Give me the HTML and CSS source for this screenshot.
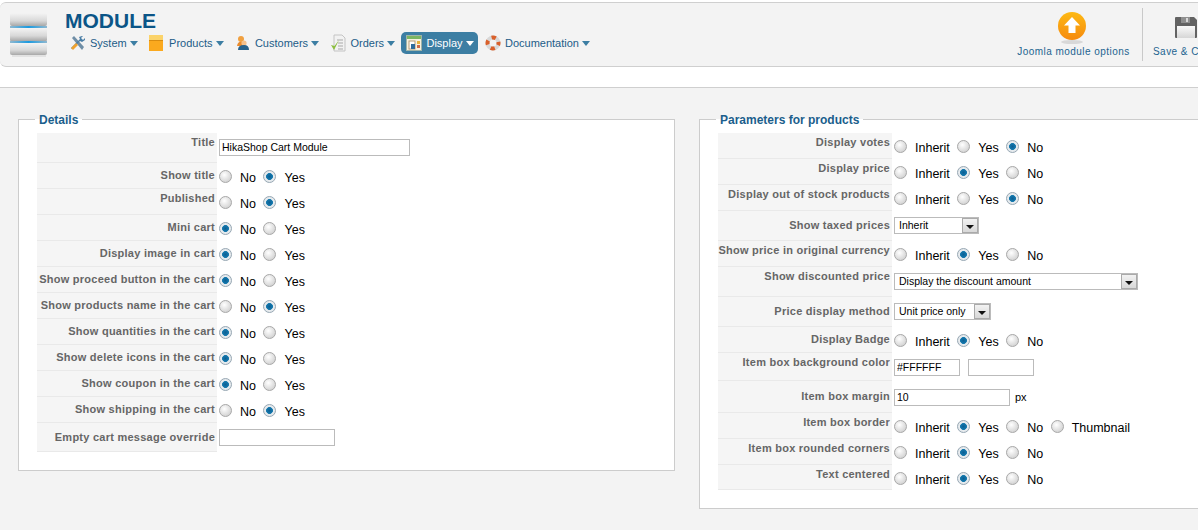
FILE: index.html
```html
<!DOCTYPE html>
<html lang="en">
<head>
<meta charset="utf-8">
<title>Module</title>
<link rel="stylesheet" href="styles.css">
</head>
<body>
<header class="header">
  <div class="brand">
    <svg class="logo" viewBox="0 0 40 46" width="40" height="46">
      <defs>
        <linearGradient id="disk" x1="0" y1="0" x2="0" y2="1"><stop offset="0" stop-color="#f4f4f4"/><stop offset=".6" stop-color="#d8d8d8"/><stop offset="1" stop-color="#a8a8a8"/></linearGradient>
        <linearGradient id="blue" x1="0" y1="0" x2="1" y2="0"><stop offset="0" stop-color="#8fb8d0"/><stop offset=".5" stop-color="#1c9be0"/><stop offset="1" stop-color="#8fb8d0"/></linearGradient>
      </defs>
      <rect x="1" y="1" width="37" height="13" rx="2" fill="url(#disk)"/>
      <rect x="1" y="14" width="37" height="2" fill="url(#blue)"/>
      <rect x="1" y="16" width="37" height="13" rx="1" fill="url(#disk)"/>
      <rect x="1" y="29" width="37" height="2" fill="url(#blue)"/>
      <rect x="1" y="31" width="37" height="12" rx="2" fill="url(#disk)"/>
      <rect x="3" y="43" width="34" height="2" fill="#e2e2e2"/>
    </svg>
    <div class="brand-text">
      <h1 class="title">MODULE</h1>
      <nav class="nav">
        <a class="nav-item">
          <svg class="nav-icon" viewBox="0 0 16 16" width="16" height="16"><path d="M2 3l2-2 10 11-2 3z" fill="#6f8ea6"/><path d="M1 13L10 4l-1-2 3-1 1 0-2 2 2 2 2-2v2l-3 2-2-1-8 8z" fill="#4a7ea6"/><path d="M1 13l5-5 2 2-5 5z" fill="#f0a22e"/></svg>
          <span>System</span><i class="caret"></i>
        </a>
        <a class="nav-item">
          <svg class="nav-icon shift" viewBox="0 0 16 18" width="16" height="18"><rect x="1" y="1" width="14" height="5" fill="#fbd36a"/><rect x="1" y="6" width="14" height="11" fill="#fba91e"/><rect x="1" y="6" width="14" height="1" fill="#d98c10"/></svg>
          <span>Products</span><i class="caret"></i>
        </a>
        <a class="nav-item">
          <svg class="nav-icon shift" viewBox="0 0 16 16" width="16" height="16"><circle cx="7" cy="4" r="3" fill="#f0a040"/><path d="M3 11q1-5 5-4 3 0 3 4z" fill="#e98a2c"/><circle cx="10" cy="8" r="2.6" fill="#f5c08a"/><path d="M4 15q0-5 6-5 5 0 5 5z" fill="#27628c"/></svg>
          <span>Customers</span><i class="caret"></i>
        </a>
        <a class="nav-item">
          <svg class="nav-icon" viewBox="0 0 16 18" width="16" height="18"><path d="M4 1h8l3 3v13H4z" fill="#f2f2f2" stroke="#c4c4c4"/><path d="M7 6h6M8 9h5M8 12h5M8 15h5" stroke="#a9a9a9"/><path d="M1 11l3 5 5-10-4.500 6z" fill="#8cbf3f"/></svg>
          <span>Orders</span><i class="caret"></i>
        </a>
        <a class="nav-item active">
          <svg class="nav-icon" viewBox="0 0 16 16" width="16" height="16"><rect x=".5" y=".5" width="15" height="15" fill="#f7f1df" stroke="#9fb3a8"/><rect x="1" y="1" width="14" height="3" fill="#7cb662"/><rect x="3" y="6" width="6" height="8" fill="#fff" stroke="#b79b77"/><rect x="5" y="9" width="4" height="5" fill="#2e6c9c"/><rect x="11" y="6" width="3" height="3" fill="#e8b23c"/><rect x="11" y="10" width="3" height="3" fill="#cf6a4a"/></svg>
          <span>Display</span><i class="caret"></i>
        </a>
        <a class="nav-item">
          <svg class="nav-icon" viewBox="0 0 16 16" width="16" height="16"><circle cx="8" cy="8" r="5.500" fill="none" stroke="#d8d8d8" stroke-width="4"/><circle cx="8" cy="8" r="5.500" fill="none" stroke="#d9602b" stroke-width="4" stroke-dasharray="4.300 4.340" stroke-dashoffset="2.100"/></svg>
          <span>Documentation</span><i class="caret"></i>
        </a>
      </nav>
    </div>
  </div>
  <div class="toolbar">
    <a class="tool tool-options">
      <svg viewBox="0 0 32 34" width="32" height="34"><defs><linearGradient id="org" x1="0" y1="0" x2="0" y2="1"><stop offset="0" stop-color="#fdb913"/><stop offset="1" stop-color="#f68a0e"/></linearGradient></defs><ellipse cx="16" cy="31" rx="11" ry="2" fill="#d8d8d8"/><circle cx="16" cy="15" r="14" fill="url(#org)"/><path d="M16 6l8 8.500h-4.500V22h-7v-7.500H8z" fill="#fff"/></svg>
      <span>Joomla module options</span>
    </a>
    <a class="tool tool-save">
      <svg viewBox="0 0 24 26" width="24" height="26"><defs><linearGradient id="sheet" x1="0" y1="0" x2="0" y2="1"><stop offset="0" stop-color="#fafafa"/><stop offset="1" stop-color="#d6d6d6"/></linearGradient></defs><path d="M2 2h18l3 3v17q0 1-1 1H2q-1 0-1-1V3q0-1 1-1z" fill="#636363"/><rect x="7" y="2" width="9" height="6" fill="#8f8f8f"/><rect x="12" y="3" width="2" height="4" fill="#d8d8d8"/><rect x="3" y="11" width="18" height="12" fill="url(#sheet)"/></svg>
      <span>Save &amp; Close</span>
    </a>
  </div>
</header>
<div class="spacer"></div>
<main class="content">
  <fieldset class="panel panel-left">
    <legend>Details</legend>
    <table class="form">
      <tr class="h29"><td class="key">Title</td><td class="val val-input v6"><input class="text w-title" type="text" value="HikaShop Cart Module"></td></tr>
      <tr><td class="key mid">Show title</td><td class="val"><input class="radio" type="radio" name="a1"><label>No</label><input class="radio" type="radio" name="a1" checked><label>Yes</label></td></tr>
      <tr><td class="key">Published</td><td class="val"><input class="radio" type="radio" name="a2"><label>No</label><input class="radio" type="radio" name="a2" checked><label>Yes</label></td></tr>
      <tr><td class="key mid">Mini cart</td><td class="val"><input class="radio" type="radio" name="a3" checked><label>No</label><input class="radio" type="radio" name="a3"><label>Yes</label></td></tr>
      <tr><td class="key mid">Display image in cart</td><td class="val"><input class="radio" type="radio" name="a4" checked><label>No</label><input class="radio" type="radio" name="a4"><label>Yes</label></td></tr>
      <tr><td class="key mid">Show proceed button in the cart</td><td class="val"><input class="radio" type="radio" name="a5" checked><label>No</label><input class="radio" type="radio" name="a5"><label>Yes</label></td></tr>
      <tr><td class="key mid">Show products name in the cart</td><td class="val"><input class="radio" type="radio" name="a6"><label>No</label><input class="radio" type="radio" name="a6" checked><label>Yes</label></td></tr>
      <tr><td class="key mid">Show quantities in the cart</td><td class="val"><input class="radio" type="radio" name="a7" checked><label>No</label><input class="radio" type="radio" name="a7"><label>Yes</label></td></tr>
      <tr><td class="key mid">Show delete icons in the cart</td><td class="val"><input class="radio" type="radio" name="a8" checked><label>No</label><input class="radio" type="radio" name="a8"><label>Yes</label></td></tr>
      <tr><td class="key mid">Show coupon in the cart</td><td class="val"><input class="radio" type="radio" name="a9" checked><label>No</label><input class="radio" type="radio" name="a9"><label>Yes</label></td></tr>
      <tr><td class="key mid">Show shipping in the cart</td><td class="val"><input class="radio" type="radio" name="a10"><label>No</label><input class="radio" type="radio" name="a10" checked><label>Yes</label></td></tr>
      <tr class="h29"><td class="key mid">Empty cart message override</td><td class="val val-input"><input class="text w-empty" type="text"></td></tr>
    </table>
  </fieldset>
  <fieldset class="panel panel-right">
    <legend>Parameters for products</legend>
    <table class="form form-right">
      <tr class="h25"><td class="key">Display votes</td><td class="val"><input class="radio" type="radio" name="b1"><label>Inherit</label><input class="radio" type="radio" name="b1"><label>Yes</label><input class="radio" type="radio" name="b1" checked><label>No</label></td></tr>
      <tr><td class="key">Display price</td><td class="val"><input class="radio" type="radio" name="b2"><label>Inherit</label><input class="radio" type="radio" name="b2" checked><label>Yes</label><input class="radio" type="radio" name="b2"><label>No</label></td></tr>
      <tr><td class="key">Display out of stock products</td><td class="val"><input class="radio" type="radio" name="b3"><label>Inherit</label><input class="radio" type="radio" name="b3"><label>Yes</label><input class="radio" type="radio" name="b3" checked><label>No</label></td></tr>
      <tr class="h30"><td class="key mid">Show taxed prices</td><td class="val val-input"><span class="sel w-taxed"><select><option>Inherit</option></select><i class="sel-btn"></i></span></td></tr>
      <tr><td class="key">Show price in original currency</td><td class="val"><input class="radio" type="radio" name="b4"><label>Inherit</label><input class="radio" type="radio" name="b4" checked><label>Yes</label><input class="radio" type="radio" name="b4"><label>No</label></td></tr>
      <tr class="h30"><td class="key">Show discounted price</td><td class="val val-input"><span class="sel w-disc"><select><option>Display the discount amount</option></select><i class="sel-btn"></i></span></td></tr>
      <tr class="h30"><td class="key mid">Price display method</td><td class="val val-input"><span class="sel w-method"><select><option>Unit price only</option></select><i class="sel-btn"></i></span></td></tr>
      <tr><td class="key mid">Display Badge</td><td class="val"><input class="radio" type="radio" name="b5"><label>Inherit</label><input class="radio" type="radio" name="b5" checked><label>Yes</label><input class="radio" type="radio" name="b5"><label>No</label></td></tr>
      <tr class="h28"><td class="key">Item box background color</td><td class="val val-input"><input class="text w-color" type="text" value="#FFFFFF"><input class="text w-color gap" type="text"></td></tr>
      <tr class="h32"><td class="key mid">Item box margin</td><td class="val val-input v9"><input class="text w-margin" type="text" value="10"><span class="unit">px</span></td></tr>
      <tr><td class="key">Item box border</td><td class="val"><input class="radio" type="radio" name="b6"><label>Inherit</label><input class="radio" type="radio" name="b6" checked><label>Yes</label><input class="radio" type="radio" name="b6"><label>No</label><input class="radio" type="radio" name="b6"><label>Thumbnail</label></td></tr>
      <tr><td class="key">Item box rounded corners</td><td class="val"><input class="radio" type="radio" name="b7"><label>Inherit</label><input class="radio" type="radio" name="b7" checked><label>Yes</label><input class="radio" type="radio" name="b7"><label>No</label></td></tr>
      <tr class="h25"><td class="key">Text centered</td><td class="val"><input class="radio" type="radio" name="b8"><label>Inherit</label><input class="radio" type="radio" name="b8" checked><label>Yes</label><input class="radio" type="radio" name="b8"><label>No</label></td></tr>
    </table>
  </fieldset>
</main>
</body>
</html>
```
FILE: styles.css
```css
* { box-sizing: border-box; }
html, body { height: 100%; }
body {
  margin: 0;
  padding-top: 2px;
  overflow: hidden;
  background: #fff;
  font-family: "Liberation Sans", Arial, sans-serif;
  font-size: 12px;
  color: #000;
}
.header {
  display: flex;
  height: 65px;
  background: #f3f3f3;
  border-top: 1px solid #cfcfcf;
  border-bottom: 1px solid #cfcfcf;
  border-radius: 6px 0 0 6px;
}
.brand { flex: 0 0 1009px; display: flex; padding: 8px 0 0 9px; }
.logo { flex: none; margin-top: 1px; }
.brand-text { margin-left: 16px; }
.title {
  margin: 0;
  font-size: 21px;
  line-height: 20px;
  font-weight: bold;
  color: #0b5587;
}
.nav { display: flex; margin: 1px 0 0 0; }
.nav-item {
  display: flex;
  align-items: center;
  height: 22px;
  padding: 0 4px 0 5px;
  margin-right: 2.4px;
  gap: 4px;
  font-size: 11px;
  color: #1c5c88;
  border-radius: 5px;
}
.nav-item span { margin-top: -1px; }
.nav-item.active { background: #3c7ea3; color: #fff; }
.nav-icon { flex: none; }
.nav-icon.shift { margin-left: -1px; margin-right: 1px; }
.caret {
  width: 0;
  height: 0;
  margin-left: -1px;
  border-left: 4px solid transparent;
  border-right: 4px solid transparent;
  border-top: 5px solid #3c7ea3;
}
.active .caret { border-top-color: #fff; }
.toolbar { flex: none; display: flex; padding-top: 5px; }
.tool {
  display: flex;
  flex-direction: column;
  align-items: center;
  height: 53px;
  font-size: 10px;
  letter-spacing: .45px;
  color: #1c6390;
  white-space: nowrap;
}
.tool span { margin-top: 1px; }
.tool svg { flex: none; }
.tool-options { width: 134px; padding-right: 4px; border-right: 1px solid #c9c9c9; }
.tool-options svg { margin: 3px 3px 0 0; }
.tool-save { padding-left: 10px; }
.tool-save svg { margin: 7px 0 3px 0; }
.tool-save span { margin-top: 2px; }
.spacer { height: 20px; }
.content {
  display: flex;
  height: 460px;
  padding: 23px 0 0 18px;
  background: #f3f3f3;
  border-top: 1px solid #cfcfcf;
}
.panel {
  flex: none;
  margin: 0;
  padding: 6px 0 0 18px;
  background: #fff;
  border: 1px solid #ccc;
}
.panel-left { width: 657px; height: 360px; }
.panel-right { width: 600px; height: 398px; margin-left: 24px; }
.panel legend {
  margin-left: -2px;
  padding: 2px 4px 0;
  font-size: 12px;
  line-height: 14px;
  font-weight: bold;
  color: #1b5e8c;
}
.form { border-collapse: collapse; table-layout: fixed; width: 500px; }
.form tr { height: 26px; }
.form .h25 { height: 25px; }
.form .h28 { height: 28px; }
.form .h29 { height: 29px; }
.form .h30 { height: 30px; }
.form .h32 { height: 32px; }
.key {
  width: 180px;
  padding: 2px 2px 0 0;
  vertical-align: top;
  text-align: right;
  white-space: nowrap;
  background: #f5f5f5;
  border-bottom: 1px solid #e9e9e9;
  font-size: 11px;
  line-height: 14px;
  font-weight: bold;
  letter-spacing: .25px;
  color: #666;
}
.key.mid { vertical-align: middle; padding-top: 0; }
.form-right .key { width: 174px; }
.val { padding: 0 0 0 2px; vertical-align: top; white-space: nowrap; }
.val-input { padding-top: 7px; }
.val-input.v6 { padding-top: 6px; }
.val-input.v9 { padding-top: 9px; }
.radio {
  appearance: none;
  display: inline-block;
  width: 13px;
  height: 13px;
  margin: 8px 0 0 0;
  vertical-align: top;
  border-radius: 50%;
  border: 1px solid #a9a9a9;
  background: radial-gradient(circle at 40% 35%, #fff, #d4d4d4 75%);
}
.radio:checked {
  border-color: #98a8b4;
  background: radial-gradient(circle, #0b5f93 0, #1478ad 40%, #e8ecef 48%, #dfe4e8 100%);
}
.val label {
  display: inline-block;
  margin: 0 7.5px 0 8px;
  padding-top: 9px;
  font-size: 12.5px;
  line-height: 14px;
  vertical-align: top;
}
.form-right tr:first-child .radio { margin-top: 7px; }
.form-right tr:first-child label { padding-top: 8px; }
.text, select {
  height: 17px;
  padding: 0 2px 1px;
  vertical-align: top;
  background: #fff;
  border: 1px solid #bbb;
  border-radius: 0;
  outline: 0;
  font-family: "Liberation Sans", Arial, sans-serif;
  font-size: 10.5px;
  color: #000;
}
.w-title { width: 191px; }
.w-empty { width: 116px; }
.w-color { width: 66px; }
.w-color.gap { margin-left: 8px; }
.w-margin { width: 116px; }
.unit { display: inline-block; margin-left: 5px; padding-top: 2px; font-size: 11px; }
.sel { position: relative; display: inline-block; height: 17px; vertical-align: top; }
.sel select { appearance: none; width: 100%; padding-left: 4px; }
.sel-btn {
  position: absolute;
  top: 1px;
  right: 1px;
  width: 16px;
  height: 15px;
  background: linear-gradient(#f2f2f2, #d8d8d8);
  border: 1px solid #aaa;
}
.sel-btn::after {
  content: "";
  position: absolute;
  left: 3px;
  top: 6px;
  border-left: 4px solid transparent;
  border-right: 4px solid transparent;
  border-top: 4px solid #111;
}
.w-taxed { width: 85px; }
.w-disc { width: 244px; }
.w-method { width: 97px; }
```
